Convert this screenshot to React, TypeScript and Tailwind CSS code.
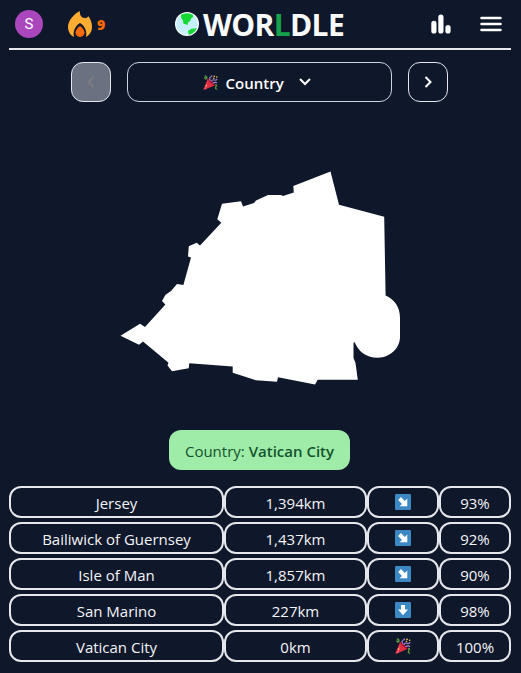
import React from "react";

const SANS = "font-['Open_Sans','Noto_Sans',sans-serif]";

function Globe() {
  return (
    <svg className="h-6 w-6 shrink-0" viewBox="0 0 24 24">
      <circle cx="12" cy="12" r="12" fill="#fff" />
      <circle cx="12" cy="12" r="10.8" fill="#c8efff" />
      <path d="M6 2.8Q12 -.2 18 2.8L18.2 5L16 6.5L15.4 8.8L13 10.6L12.6 13L11.2 12.4L8.3 11.6L8 8.6L6.2 6.2Z" fill="#16d832" />
      <path d="M13 19L16.5 16.8L22 16.2Q19 21.8 13.8 22.7Z" fill="#16d832" />
    </svg>
  );
}

function Flame() {
  return (
    <svg className="h-[26px] w-6 shrink-0" viewBox="0 0 24 26">
      <path d="M11.8 0C6 3 0 9.5 0 16C0 20.6 2.7 24.5 6 26C4.8 20.8 6.7 15 12 12C17.3 15 19.2 20.8 18 26C21.5 24.3 24 20.6 24 16C24 11.5 22.6 8.2 20.4 5.3C19.3 6.7 17.8 7.4 16.3 7.1C12.8 6.5 11.8 3.5 11.8 0Z" fill="#ffac33" />
      <path d="M12 15C9.8 16.5 7.5 19 7.5 21.6C7.5 24 9.3 26 12 26S16.5 24 16.5 21.6C16.5 19 14.2 16.5 12 15Z" fill="#ff6a00" />
    </svg>
  );
}

function Party({ className }: { className: string }) {
  return (
    <svg className={className} viewBox="0 0 36 36">
      <path d="M11.6 8.5L1 34Q1 36 3 35.4L28.3 25Z" fill="#dd2e44" />
      <path d="M12 14L3 35L8 33Z" fill="#ea596e" />
      <path d="M11.5 8.5C15 7 29 20 28.3 25C23 24 13 15 11.5 8.5Z" fill="#a0041e" />
      <path d="M4 2Q10 2 9 9M3 8Q6 4 7 11M29 24Q35 22 31 28Q28 34 34 34" fill="none" stroke="#5c9b42" strokeWidth="3" />
      <path d="M18 14Q14 7 18 5Q23 3 20 1M20 16Q22 10 27 12Q32 14 34 9" fill="none" stroke="#9276bd" strokeWidth="3" />
      <path d="M23 20Q29 16 34 19" fill="none" stroke="#aa8dd8" strokeWidth="2.5" />
      <g fill="#ffcc4d">
        <circle cx="27" cy="3" r="2" />
        <circle cx="33" cy="5" r="1.8" />
        <circle cx="26" cy="8" r="1.8" />
        <circle cx="8" cy="25" r="1.8" />
      </g>
    </svg>
  );
}

function Arrow({ down = false }: { down?: boolean }) {
  return (
    <svg className="h-4 w-4" viewBox="0 0 16 16">
      <rect width="16" height="16" rx="1.2" fill="#3b88c3" />
      {down ? (
        <path d="M6 3H10V7.5H13L8 13.2L3 7.5H6Z" fill="#fff" />
      ) : (
        <path d="M12.3 4.6V12.3H4.6L7 9.9L3.1 6L5.9 3.1L9.8 7Z" fill="#fff" />
      )}
    </svg>
  );
}

function Chevron({ d, className }: { d: string; className: string }) {
  return (
    <svg className={className} viewBox="0 0 12 12" fill="none" stroke="currentColor" strokeWidth="2">
      <path d={d} />
    </svg>
  );
}

type Guess = { name: string; distance: string; icon: React.ReactNode; score: string };

const guesses: Guess[] = [
  { name: "Jersey", distance: "1,394km", icon: <Arrow />, score: "93%" },
  { name: "Bailiwick of Guernsey", distance: "1,437km", icon: <Arrow />, score: "92%" },
  { name: "Isle of Man", distance: "1,857km", icon: <Arrow />, score: "90%" },
  { name: "San Marino", distance: "227km", icon: <Arrow down />, score: "98%" },
  { name: "Vatican City", distance: "0km", icon: <Party className="h-4 w-4" />, score: "100%" },
];

const cell = "flex h-8 items-center justify-center rounded-xl border-2 border-gray-200 whitespace-nowrap";

export default function App() {
  return (
    <div className={`h-[673px] w-[521px] overflow-hidden bg-slate-900 pr-[10px] pl-[9px] text-[15px] text-gray-100 ${SANS}`}>
      <header className="flex h-[50px] items-center border-b-2 border-gray-200">
        <div className="ml-[6px] flex h-7 w-7 items-center justify-center rounded-full bg-[#ab47bc] font-[Roboto,sans-serif] text-[15px] text-white">S</div>
        <div className="ml-[25px] flex items-center gap-[5px]">
          <Flame />
          <span className="w-[9px] pt-[1px] text-[14px] font-extrabold text-[#ff6a00]">9</span>
        </div>
        <h1 className="ml-[69px] flex w-[170px] items-center gap-[4px] whitespace-nowrap">
          <Globe />
          <span className="pt-[2px] text-[30px] leading-[42px] font-bold tracking-[-0.65px] text-gray-50">
            WOR<span className="text-[#16a34a]">L</span>DLE
          </span>
        </h1>
        <svg className="ml-[86px] h-5 w-5 shrink-0" viewBox="0 0 20 20" fill="#fff">
          <rect x="0.3" y="6.8" width="5.2" height="12.8" rx="2.6" />
          <rect x="7.3" y="0.6" width="5.2" height="19" rx="2.6" />
          <rect x="14.4" y="11" width="5.2" height="8.6" rx="2.6" />
        </svg>
        <svg className="ml-[29px] h-[16px] w-[22px] shrink-0" viewBox="0 0 22 16" stroke="#fff" strokeWidth="2.5" strokeLinecap="round">
          <path d="M1.5 2.1H20.5M1.5 8H20.5M1.5 13.9H20.5" />
        </svg>
      </header>

      <nav className="mt-3 ml-[62px] flex gap-4">
        <button className="flex h-10 w-10 items-center justify-center rounded-xl border border-gray-200 bg-gray-500 text-[#7b7d80]">
          <Chevron className="h-3 w-3" d="M8.5 1L3.5 6L8.5 11" />
        </button>
        <button className="flex h-10 w-[265px] items-center justify-center rounded-xl border border-slate-300 pr-[6px] text-white">
          <Party className="h-[15px] w-[15px]" />
          <span className="ml-2 w-[59px] pt-[2px] text-left font-semibold">Country</span>
          <Chevron className="ml-[14px] h-3 w-3" d="M1 3L6 8L11 3" />
        </button>
        <button className="flex h-10 w-10 items-center justify-center rounded-xl border border-gray-200 text-white">
          <Chevron className="h-3 w-3" d="M3.5 1L8.5 6L3.5 11" />
        </button>
      </nav>

      <svg className="mt-[58px] ml-[101px] h-[240px] w-[300px]" viewBox="110 160 300 240" fill="#fff">
        <path d="M120.5 335.8L140 323.8L145 327L165.4 304.4L162 301L165.3 295L171 291L177 284L183.4 285L191 257.5L188 256.6L188.8 246.3L196.7 242.8L200 245.6L221.3 222.7L217.3 219.2L222 203.7L241 201.3L243 206.5L254 203L256 200.6L268 195H281L283 196L293.8 192.5L293.3 186L330.5 171.6L339 204.7L384.2 216.8L385.6 295.5C394 299.5 400 306 400 318V337C400 348 390 357.7 378 357.7C365 357.7 358.5 351 354.5 342L353.5 343V358L355.5 363L357.8 379.8H317.7L315 384.4L278 377.3L277 381.7L256 380.3L232.7 372.7V366.5L189.3 363.2L188.7 368.2L172 371.3L167.5 365.5L168.5 362.7L143 341.4L139 344.7Z" />
      </svg>

      <div className="mt-[30px] ml-[160px] flex h-10 w-[181px] items-center justify-center rounded-xl bg-[#9eeca8] pt-[3px] whitespace-nowrap text-[#14532d]">
        <p>
          Country: <b className="font-semibold">Vatican City</b>
        </p>
      </div>

      <div className="mt-4 flex flex-col gap-1">
        {guesses.map((g) => (
          <div key={g.name} className="grid grid-cols-[215px_143px_72px_72px]">
            <div className={cell}>
              <span className="pt-[3px]">{g.name}</span>
            </div>
            <div className={cell}>
              <span className="pt-[3px]">{g.distance}</span>
            </div>
            <div className={cell}>{g.icon}</div>
            <div className={cell}>
              <span className="pt-[3px]">{g.score}</span>
            </div>
          </div>
        ))}
      </div>
    </div>
  );
}
